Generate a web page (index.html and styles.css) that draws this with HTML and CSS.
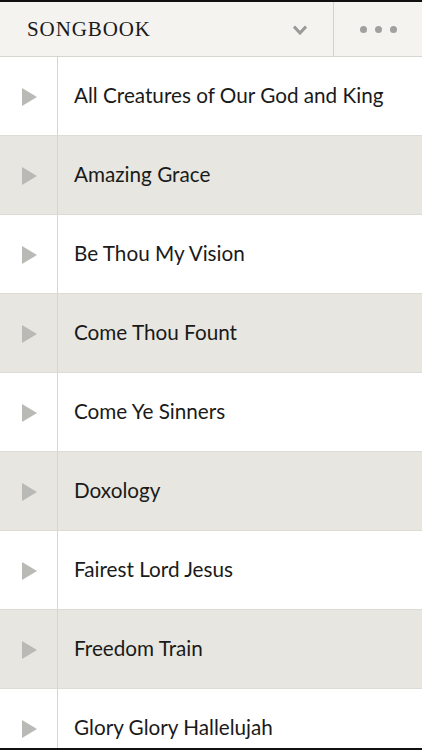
FILE: index.html
```html
<!DOCTYPE html>
<html lang="en">

<head>
  <meta charset="UTF-8" />
  <meta name="viewport" content="width=device-width, initial-scale=1.0" />
  <title>Songbook</title>
  <link rel="stylesheet" href="styles.css">
</head>

<body>
  <div class="app">
    <header class="topbar">
      <div class="title">
        <span>SONGBOOK</span>
        <svg class="chevron" width="14" height="10" viewBox="0 0 14 10">
          <path d="M1 1.5 L7 8 L13 1.5" fill="none" stroke="#9a9a98" stroke-width="3" />
        </svg>
      </div>
      <div class="menu">
        <span class="dot"></span><span class="dot"></span><span class="dot"></span>
      </div>
    </header>

    <ul class="songs">
      <li class="song"><span class="play"></span><span class="name">All Creatures of Our God and King</span></li>
      <li class="song alt"><span class="play"></span><span class="name">Amazing Grace</span></li>
      <li class="song"><span class="play"></span><span class="name">Be Thou My Vision</span></li>
      <li class="song alt"><span class="play"></span><span class="name">Come Thou Fount</span></li>
      <li class="song"><span class="play"></span><span class="name">Come Ye Sinners</span></li>
      <li class="song alt"><span class="play"></span><span class="name">Doxology</span></li>
      <li class="song"><span class="play"></span><span class="name">Fairest Lord Jesus</span></li>
      <li class="song alt"><span class="play"></span><span class="name">Freedom Train</span></li>
      <li class="song"><span class="play"></span><span class="name">Glory Glory Hallelujah</span></li>
    </ul>
  </div>
</body>

</html>
```

FILE: styles.css
```css
* {
  box-sizing: border-box;
}

html,
body {
  margin: 0;
  padding: 0;
  background-color: #fff;
}

.app {
  height: 750px;
  overflow: hidden;
  border-top: 2px solid #111;
  border-bottom: 2px solid #111;
  display: flex;
  flex-direction: column;
}

/* Barra superiore */
.topbar {
  display: flex;
  height: 55px;
  flex-shrink: 0;
  background-color: #f4f3f0;
  border-bottom: 1px solid #d6d5d0;
}

.title {
  flex: 1;
  display: flex;
  align-items: center;
  justify-content: space-between;
  padding: 0 26px 0 27px;
  border-right: 1px solid #d2d1cc;
  font-family: 'Liberation Serif', serif;
  font-size: 21px;
  letter-spacing: 0.9px;
  color: #1a1a1a;
}

.chevron {
  margin-top: 1px;
}

.menu {
  width: 88px;
  display: flex;
  align-items: center;
  justify-content: center;
  gap: 8px;
}

.dot {
  width: 7px;
  height: 7px;
  border-radius: 50%;
  background-color: #a0a09e;
}

/* Lista canzoni */
.songs {
  list-style: none;
  margin: 0;
  padding: 0;
  flex: 1;
}

.song {
  display: flex;
  height: 79px;
  border-bottom: 1px solid #dcdbd6;
  background-color: #fff;
}

.song.alt {
  background-color: #e7e6e0;
}

.play {
  width: 58px;
  flex-shrink: 0;
  border-right: 1px solid #d6d5d0;
  position: relative;
}

.play::before {
  content: "";
  position: absolute;
  left: 22px;
  top: 31px;
  border-left: 15px solid #b9b9b6;
  border-top: 9px solid transparent;
  border-bottom: 9px solid transparent;
}

.name {
  display: flex;
  align-items: center;
  padding-left: 16px;
  padding-bottom: 2px;
  font-family: 'Lato', sans-serif;
  font-size: 20.7px;
  color: #1a1a1a;
}
```
